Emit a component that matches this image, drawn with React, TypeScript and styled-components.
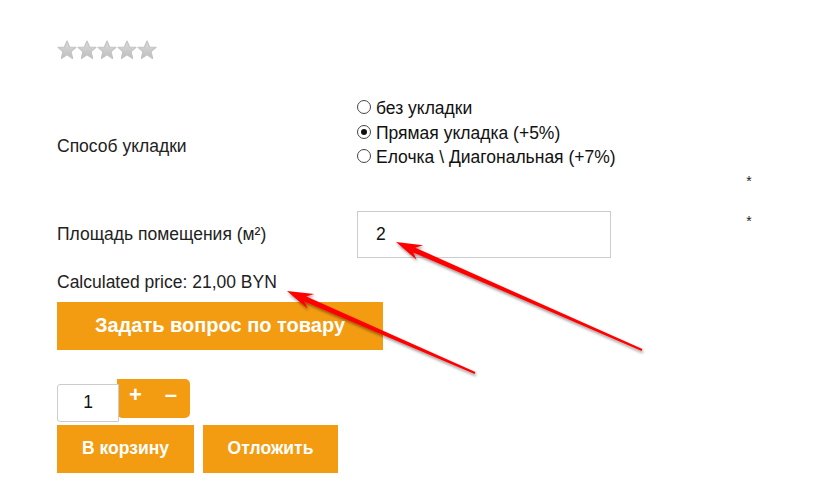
import React from 'react';
import styled, { createGlobalStyle } from 'styled-components';

const GlobalStyle = createGlobalStyle`
  html, body {
    margin: 0;
    padding: 0;
    background: #fff;
  }
  body {
    font-family: "Liberation Sans", Arial, sans-serif;
    color: #222;
  }
`;

const orange = '#f39c12';

type Point = [number, number];

// builds a tapered arrow polygon from tail to tip
const arrowPoints = (tail: Point, tip: Point): string => {
  const dx = tip[0] - tail[0];
  const dy = tip[1] - tail[1];
  const len = Math.hypot(dx, dy);
  const ux = dx / len;
  const uy = dy / len;
  const nx = -uy;
  const ny = ux;
  const headLen = 26;
  const headW = 8;
  const base: Point = [tip[0] - ux * headLen, tip[1] - uy * headLen];
  const notch: Point = [base[0] + ux * 6, base[1] + uy * 6];
  const at = (p: Point, w: number): string => `${p[0] + nx * w},${p[1] + ny * w}`;
  return [
    at(tail, 1),
    at(notch, 2.6),
    at(base, headW),
    `${tip[0]},${tip[1]}`,
    at(base, -headW),
    at(notch, -2.6),
    at(tail, -1),
  ].join(' ');
};

const arrows: Array<[Point, Point]> = [
  [
    [642, 350],
    [396, 242],
  ],
  [
    [475, 373],
    [287, 291],
  ],
];

const Page = styled.div`
  position: relative;
  width: 839px;
  height: 483px;
  overflow: hidden;
  padding: 40px 0 0 57px;
  box-sizing: border-box;
`;

const Stars = styled.div`
  display: flex;
  gap: 0;
  height: 20px;
`;

const FormGrid = styled.div`
  display: grid;
  grid-template-columns: 300px 382px 20px;
  margin-top: 36px;
`;

const Label = styled.div`
  font-size: 17.5px;
  line-height: 24px;
  align-self: center;
`;

const RadioGroup = styled.div`
  display: flex;
  flex-direction: column;
  padding-bottom: 27px;
`;

const RadioRow = styled.label`
  display: flex;
  align-items: center;
  gap: 5px;
  font-size: 17.5px;
  line-height: 24.5px;
  color: #111;
`;

const RadioMark = styled.span<{ $checked?: boolean }>`
  width: 14px;
  height: 14px;
  border: 1px solid #444;
  border-radius: 50%;
  box-sizing: border-box;
  display: flex;
  align-items: center;
  justify-content: center;
  margin-top: -2px;

  &::after {
    content: '';
    width: 6px;
    height: 6px;
    border-radius: 50%;
    background: #111;
    display: ${(p) => (p.$checked ? 'block' : 'none')};
  }
`;

const Required = styled.div<{ $bottom?: boolean }>`
  font-size: 14px;
  line-height: 14px;
  text-align: center;
  align-self: ${(p) => (p.$bottom ? 'end' : 'start')};
  margin-bottom: ${(p) => (p.$bottom ? '9px' : '0')};
  color: #222;
`;

const AreaLabel = styled(Label)`
  margin-top: 14px;
`;

const AreaRequired = styled(Required)`
  margin-top: 17px;
`;

const AreaInput = styled.div`
  margin-top: 14px;
  width: 254px;
  height: 47px;
  border: 1px solid #ccc;
  box-sizing: border-box;
  padding-left: 18px;
  display: flex;
  align-items: center;
  font-size: 17.5px;
  color: #111;
`;

const Price = styled.div`
  margin-top: 12px;
  font-size: 17.5px;
  line-height: 24px;
`;

const OrangeButton = styled.button<{ $width: number; $size?: number }>`
  display: flex;
  align-items: center;
  justify-content: center;
  width: ${(p) => p.$width}px;
  height: 48px;
  background: ${orange};
  border: none;
  color: #fff;
  font-family: "Liberation Sans", Arial, sans-serif;
  font-weight: bold;
  font-size: ${(p) => p.$size ?? 17.5}px;
  padding: 0;
  cursor: pointer;
`;

const AskButton = styled(OrangeButton)`
  margin-top: 8px;
`;

const QtyRow = styled.div`
  display: flex;
  align-items: flex-start;
  margin-top: 29px;
`;

const QtyInput = styled.div`
  position: relative;
  z-index: 1;
  margin-top: 5px;
  width: 62px;
  height: 38px;
  border: 1px solid #ccc;
  border-radius: 3px 0 0 3px;
  box-sizing: border-box;
  background: #fff;
  display: flex;
  align-items: center;
  justify-content: center;
  font-size: 17.5px;
  color: #111;
`;

const QtyButtons = styled.div`
  margin-left: -2px;
  width: 73px;
  height: 39px;
  background: ${orange};
  border-radius: 0 5px 5px 5px;
  display: flex;
  padding: 2px 0 0 12px;
  box-sizing: border-box;
  gap: 23px;
  color: #fff;
  font-weight: bold;
  font-size: 22px;
  line-height: 28px;
`;

const CartRow = styled.div`
  display: flex;
  gap: 9px;
  margin-top: 3px;
`;

const Overlay = styled.svg`
  position: absolute;
  left: 0;
  top: 0;
  pointer-events: none;
`;

const Star = () => (
  <svg width="20" height="20" viewBox="0 0 20 20">
    <defs>
      <linearGradient id="starGrad" x1="0" y1="0" x2="0" y2="1">
        <stop offset="0" stopColor="#dcdcdc" />
        <stop offset="1" stopColor="#bdbdbd" />
      </linearGradient>
    </defs>
    <polygon
      points="10,1 12.6,7 19,7.4 14.1,11.6 15.6,18.4 10,14.8 4.4,18.4 5.9,11.6 1,7.4 7.4,7"
      fill="url(#starGrad)"
      stroke="#c4c4c4"
      strokeWidth="1.2"
      strokeLinejoin="round"
    />
  </svg>
);

const options = [
  { label: 'без укладки', checked: false },
  { label: 'Прямая укладка (+5%)', checked: true },
  { label: 'Елочка \\ Диагональная (+7%)', checked: false },
];

const App = (): JSX.Element => (
  <>
    <GlobalStyle />
    <Page>
      <Stars>
        {[0, 1, 2, 3, 4].map((i) => (
          <Star key={i} />
        ))}
      </Stars>

      <FormGrid>
        <Label>Способ укладки</Label>
        <RadioGroup>
          {options.map((o) => (
            <RadioRow key={o.label}>
              <RadioMark $checked={o.checked} />
              {o.label}
            </RadioRow>
          ))}
        </RadioGroup>
        <Required $bottom>*</Required>

        <AreaLabel>Площадь помещения (м²)</AreaLabel>
        <AreaInput>2</AreaInput>
        <AreaRequired>*</AreaRequired>
      </FormGrid>

      <Price>Calculated price: 21,00 BYN</Price>
      <AskButton $width={326} $size={20}>
        Задать вопрос по товару
      </AskButton>

      <QtyRow>
        <QtyInput>1</QtyInput>
        <QtyButtons>
          <span>+</span>
          <span>–</span>
        </QtyButtons>
      </QtyRow>

      <CartRow>
        <OrangeButton $width={137}>В корзину</OrangeButton>
        <OrangeButton $width={135}>Отложить</OrangeButton>
      </CartRow>

      <Overlay width="839" height="483">
        <defs>
          <filter id="arrowShadow" x="-10%" y="-10%" width="120%" height="130%">
            <feDropShadow dx="1" dy="2" stdDeviation="1.5" floodColor="#000" floodOpacity="0.45" />
          </filter>
        </defs>
        {arrows.map(([tail, tip], i) => (
          <polygon key={i} points={arrowPoints(tail, tip)} fill="#ff0000" filter="url(#arrowShadow)" />
        ))}
      </Overlay>
    </Page>
  </>
);

export default App;
